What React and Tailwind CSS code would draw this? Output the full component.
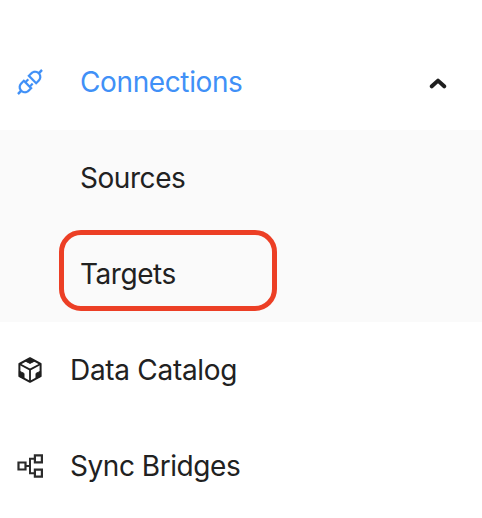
import { AiOutlineApi } from "react-icons/ai";

function Chevron() {
  return (
    <svg width="18" height="14" viewBox="0 0 18 14" fill="none" stroke="#1f1f1f" strokeWidth="4" strokeLinecap="round" strokeLinejoin="round">
      <path d="M2.8 10.3 L9 4.6 L15.2 10.3" />
    </svg>
  );
}

function CubeIcon() {
  return (
    <svg width="26" height="28" viewBox="0 0 26 28" fill="none" stroke="#1f1f1f" strokeWidth="2" strokeLinejoin="round">
      <path d="M13 2.2 L23.6 8 V20.2 L13 25.8 L2.4 20.2 V8 Z" />
      <path d="M2.4 8 L13 13.6 L23.6 8 M13 13.6 V25.8" strokeWidth="1.8" />
      <path
        d="M8 4.9 L13 2.2 L18 4.9 L13 7.4 Z M2.4 15.2 L7 17.4 V22.6 L2.4 20.2 Z M23.6 15.2 L19 17.4 V22.6 L23.6 20.2 Z"
        fill="#1f1f1f"
        strokeWidth="1"
      />
    </svg>
  );
}

function BridgeIcon() {
  return (
    <svg width="28" height="26" viewBox="0 0 28 26" fill="none" stroke="#2b2b2b" strokeWidth="2.2">
      <path d="M2.5 9.5h7v7h-7zM18.9 2.3h7v7h-7zM18.9 16.7h7v7h-7z" />
      <path d="M9.5 13H14M18.9 5.8H14v14.4h4.9" strokeWidth="2" />
    </svg>
  );
}

export default function App() {
  return (
    <nav className="h-[518px] w-[482px] overflow-hidden bg-white pt-[34px] font-['Inter',sans-serif] text-[28px] leading-none tracking-[-0.45px] text-[#212121]">
      <div className="flex h-24 items-center pl-3.5 pr-[35px] text-[#4090f7]">
        <AiOutlineApi className="size-8 stroke-[#4090f7] stroke-[4]" />
        <span className="ml-[34px] flex-1 tracking-[-0.38px]">Connections</span>
        <span className="pt-0.5">
          <Chevron />
        </span>
      </div>
      <div className="bg-[#fafafa]">
        <div className="flex h-24 items-center pl-20">Sources</div>
        <div className="relative flex h-24 items-center pl-20">
          Targets
          <span className="absolute left-[59px] top-1 h-[81px] w-[218px] rounded-[22px] border-[5px] border-[#ec3f25]" />
        </div>
      </div>
      <div className="flex h-24 items-center pl-[17px]">
        <CubeIcon />
        <span className="ml-[27px] tracking-[-0.3px]">Data Catalog</span>
      </div>
      <div className="flex h-24 items-center pl-4">
        <BridgeIcon />
        <span className="ml-[26px]">Sync Bridges</span>
      </div>
    </nav>
  );
}
